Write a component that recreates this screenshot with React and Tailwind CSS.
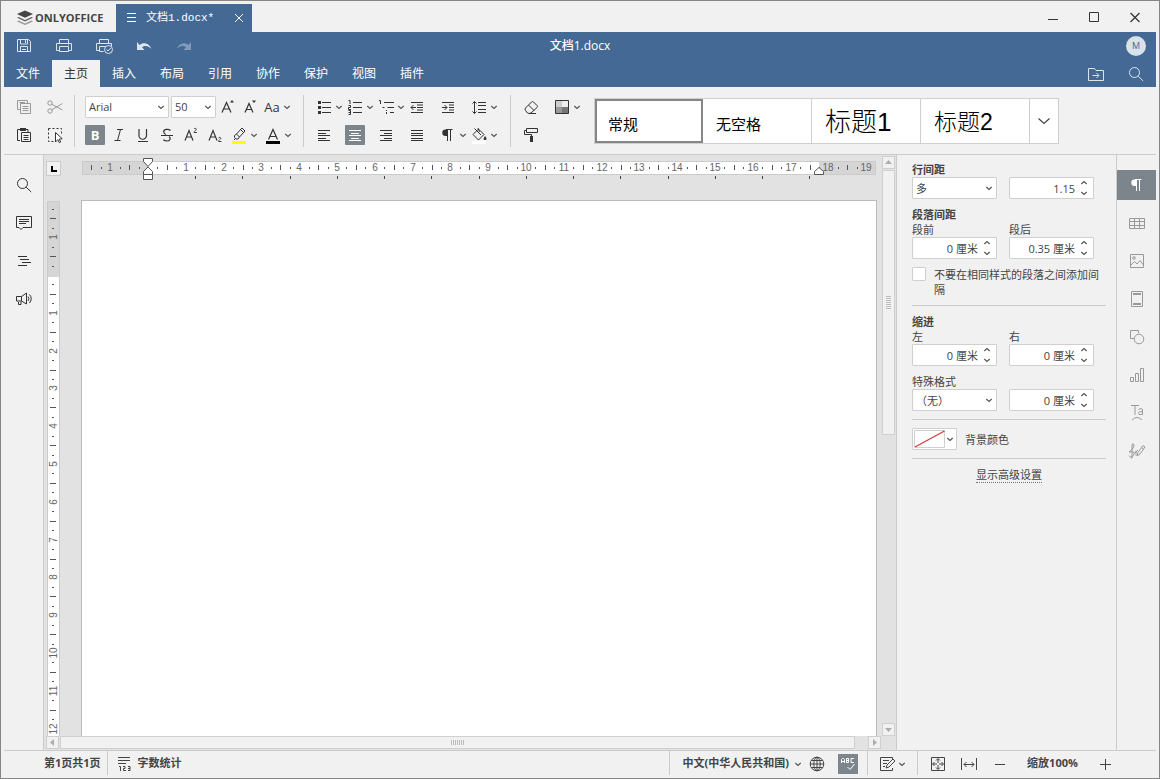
import React, { useState } from "react";

const UI_FONT = "font-['Open_Sans','Noto_Sans_CJK_SC',sans-serif]";

// base svg, drawn on a 20px grid
const Icon = ({ children, className = "", size = 20 }) => (
  <svg
    width={size}
    height={size}
    viewBox={`0 0 ${size} ${size}`}
    fill="none"
    stroke="currentColor"
    className={`shrink-0 ${className}`}
    aria-hidden="true"
  >
    {children}
  </svg>
);

const Caret = ({ className = "" }) => (
  <svg
    width="10"
    height="10"
    viewBox="0 0 10 10"
    fill="none"
    stroke="#555"
    strokeWidth="1.2"
    className={`shrink-0 pointer-events-none ${className}`}
    aria-hidden="true"
  >
    <path d="M2.3 4 5 6.5 7.7 4" />
  </svg>
);

const ParaMark = () => (
  <Icon>
    <path d="M9.5 4.5h-2a3.2 3.2 0 0 0 0 6.4h2z" fill="currentColor" stroke="none" />
    <path d="M8 4.5h6.5M9.5 4v12M12.5 4v12" />
  </Icon>
);

const SearchIcon = () => (
  <Icon>
    <circle cx="8.5" cy="8.5" r="5" />
    <path d="m12.2 12.2 5 4.8" />
  </Icon>
);

// toolbar button with optional drop-down arrow
const Tool = ({ label, caret, active, muted, wide, children }) => (
  <div className={`flex items-center ${wide ? "w-[31px]" : ""}`}>
    <button
      type="button"
      aria-label={label}
      title={label}
      className={`flex h-5 w-5 items-center justify-center rounded-[1px] ${
        active ? "bg-[#7d858c] text-white" : muted ? "text-[#999]" : "text-[#333]"
      }`}
    >
      {children}
    </button>
    {caret && <Caret />}
  </div>
);

const Separator = () => <div className="h-[52px] w-px shrink-0 self-center bg-[#cbcbcb]" />;

const Combo = ({ label, value, className = "" }) => (
  <div className={`relative h-[22px] shrink-0 ${className}`}>
    <select
      aria-label={label}
      defaultValue={value}
      className="block h-full w-full appearance-none rounded-[1px] border border-[#cfcfcf] bg-white pl-[3px] text-[11px] text-[#444]"
    >
      <option>{value}</option>
    </select>
    <Caret className="absolute top-[6px] right-[3px]" />
  </div>
);

const Spinner = ({ id, label, value }) => {
  const [val, setVal] = useState(value);
  return (
    <div className="flex h-[22px] w-[85px] items-center rounded-[1px] border border-[#cfcfcf] bg-white">
      <input
        id={id}
        aria-label={label}
        value={val}
        onChange={(e) => setVal(e.target.value)}
        className="w-full min-w-0 flex-1 bg-transparent text-right text-[11px] text-[#444]"
      />
      <div className="flex w-[18px] flex-col items-center">
        <button type="button" aria-label="+" className="flex h-[10px] items-center">
          <Caret className="rotate-180" />
        </button>
        <button type="button" aria-label="-" className="flex h-[10px] items-center">
          <Caret />
        </button>
      </div>
    </div>
  );
};

const TitleBar = () => (
  <header className="flex h-[31px] shrink-0 items-end">
    <div className="flex h-full w-28 items-center pt-[3px] pl-3 text-[#444]">
      <Icon size={18}>
        <path d="m9 1.5 8 3.6-8 3.7-8-3.7z" fill="#444" stroke="none" />
        <path d="m2.7 8 6.3 2.9L15.3 8l1.700.8-8 3.700-8-3.700z" fill="#666" stroke="none" />
        <path d="m2.7 11.6 6.3 2.9 6.3-2.9 1.700.8-8 3.700-8-3.700z" fill="#999" stroke="none" />
      </Icon>
      <span className="ml-px text-[11px] font-bold">ONLYOFFICE</span>
    </div>
    <div className="flex h-7 w-[136px] items-center bg-[#446995] pr-2 pl-[5px] text-white">
      <Icon>
        <path d="M6 5.5h9M6 9.5h9M6 13.5h9" />
      </Icon>
      <span className="ml-[5px] flex-1 text-[11px] font-['Liberation_Mono','Noto_Sans_CJK_SC',monospace]">文档1.docx*</span>
      <button type="button" aria-label="关闭文档" className="flex items-center">
        <Icon size={10}>
          <path d="m1 1 8 8M9 1 1 9" />
        </Icon>
      </button>
    </div>
    <div className="ml-auto flex items-center gap-[21px] self-center pr-[11px] text-[#333]">
      <button type="button" aria-label="最小化">
        <Icon>
          <path d="M5 12.5h10" />
        </Icon>
      </button>
      <button type="button" aria-label="最大化">
        <Icon>
          <path d="M5.5 5.5h9v9h-9z" />
        </Icon>
      </button>
      <button type="button" aria-label="关闭">
        <Icon>
          <path d="m5.5 6 9 9m0-9-9 9" strokeWidth="1.2" />
        </Icon>
      </button>
    </div>
  </header>
);

const tabs = ["文件", "主页", "插入", "布局", "引用", "协作", "保护", "视图", "插件"];

const Header = () => {
  const [tab, setTab] = useState("主页");
  return (
    <div className="shrink-0 bg-[#446995] text-[#dce5ef]">
      <div className="grid h-7 grid-cols-[1fr_auto_1fr] items-center">
        <div className="flex">
          <button type="button" aria-label="保存" className="flex w-10 justify-center">
            <Icon>
              <path d="M3.5 3.5h11l2 2v10h-13zM6.5 4v4h7V4M11.5 4v3M6.5 15v-4.500h7V15M8 13.5h4" />
            </Icon>
          </button>
          <button type="button" aria-label="打印" className="flex w-10 justify-center">
            <Icon>
              <path d="M5.5 7V3.5h9V7M5 14.5H2.5v-7h15v7H15M5.5 10.5h9v5h-9zM14 9h1" />
            </Icon>
          </button>
          <button type="button" aria-label="快速打印" className="flex w-10 justify-center">
            <Icon>
              <path d="M5.5 7V3.5h9V7M5 14.5H2.5v-7h15V10M9.5 15.5h-4v-5h6" />
              <circle cx="14.5" cy="13.5" r="4" />
              <path d="m12.5 13.5 1.5 1.5 2.8-3" />
            </Icon>
          </button>
          <button type="button" aria-label="撤消" className="flex w-10 justify-center">
            <Icon>
              <path d="M3 6v8h7.5L8 11.3c2.5-2.3 6.5-1.8 9.3 1.5C15.5 7.5 9.5 5.5 5.5 9z" fill="currentColor" stroke="none" />
            </Icon>
          </button>
          <button type="button" aria-label="重做" className="flex w-10 justify-center opacity-40">
            <Icon>
              <path d="M17 6v8H9.5l2.5-2.7c-2.5-2.3-6.5-1.8-9.3 1.5C4.5 7.5 10.5 5.5 14.5 9z" fill="currentColor" stroke="none" />
            </Icon>
          </button>
        </div>
        <h1 className="text-[12px] font-medium text-white">文档1.docx</h1>
        <div className="flex justify-end pr-[10px]">
          <span className="flex h-5 w-5 items-center justify-center rounded-full bg-[#d9e1ea] text-[9px] text-[#446995]">M</span>
        </div>
      </div>
      <div className="flex h-[27px] items-center">
        <nav className="flex h-full">
          {tabs.map((t) => (
            <button
              key={t}
              type="button"
              onClick={() => setTab(t)}
              className={`w-12 text-[12px] ${t === tab ? "bg-[#f1f1f1] text-[#333]" : "text-white"}`}
            >
              {t}
            </button>
          ))}
        </nav>
        <div className="ml-auto flex gap-5 pr-[10px]">
          <button type="button" aria-label="打开文件位置">
            <Icon>
              <path d="M2.5 16.5v-12h6l1.5 2h7.5v10zM6.5 11.5h6M10.5 9l2.5 2.5-2.5 2.5" />
            </Icon>
          </button>
          <button type="button" aria-label="查找">
            <SearchIcon />
          </button>
        </div>
      </div>
    </div>
  );
};

const alignPaths = {
  left: "M4 5.5h12M4 8h8M4 10.5h12M4 13h8M4 15.5h12",
  center: "M4 5.5h12M6 8h8M4 10.5h12M6 13h8M4 15.5h12",
  right: "M4 5.5h12M8 8h8M4 10.5h12M8 13h8M4 15.5h12",
  justify: "M4 5.5h12M4 8h12M4 10.5h12M4 13h12M4 15.5h12",
};

const AlignIcon = ({ kind }) => (
  <Icon>
    <path d={alignPaths[kind]} shapeRendering="crispEdges" />
  </Icon>
);

const Toolbar = () => (
  <div className="flex shrink-0 border-b border-[#cbcbcb] bg-[#f1f1f1] pt-[6px] pb-[5px]">
    <div className="grid shrink-0 grid-cols-2 items-center gap-x-[11px] pr-[9px] pl-[10px]">
      <Tool label="复制" muted>
        <Icon>
          <path d="M6 12.5H3.5v-9h10V6M6.5 6.5h10v10h-10zM5.5 5.5H11M8.5 9.5h6M8.5 11.5h6M8.5 13.5h6" />
        </Icon>
      </Tool>
      <Tool label="剪切" muted>
        <Icon>
          <circle cx="5" cy="6" r="2.2" />
          <circle cx="5" cy="14" r="2.2" />
          <path d="M6.8 7.3 17.5 13M6.8 12.7 17.5 6.5" />
        </Icon>
      </Tool>
      <Tool label="粘贴">
        <Icon>
          <path d="M6 15.5H3.5v-11H14V7" />
          <path d="M6 3h6v3H6z" fill="currentColor" stroke="none" />
          <path d="M7.5 7.5h9v9h-9zM9.5 10.5h5M9.5 12.5h5M9.5 14.5h5" />
        </Icon>
      </Tool>
      <Tool label="全选">
        <Icon>
          <path d="M3.5 3.5h13v5M3.5 3.5v13H10" strokeDasharray="2 2" />
          <path d="M10.5 7.5V17l2.3-2.3 1.6 3 1.3-.7-1.5-2.8 3-.5z" fill="#fff" />
        </Icon>
      </Tool>
    </div>
    <Separator />
    <div className="flex shrink-0 flex-col px-[10px]">
      <div className="flex h-7 items-center gap-[2px]">
        <Combo label="字体" value="Arial" className="w-[84px]" />
        <Combo label="字号" value="50" className="w-[45px]" />
        <Tool label="增大字号">
          <Icon>
            <path d="m4 15.5 4.5-10 4.5 10M5.5 12h6" strokeWidth="1.2" />
            <path d="m12 5.5 2-2.500 2 2.500z" fill="currentColor" stroke="none" />
          </Icon>
        </Tool>
        <Tool label="减小字号">
          <Icon>
            <path d="m5 15.5 4-9 4 9M6.5 12.5h5" strokeWidth="1.2" />
            <path d="m12 3.5 2 2.500 2-2.500z" fill="currentColor" stroke="none" />
          </Icon>
        </Tool>
        <Tool label="更改大小写" caret>
          <span className="text-[13px] leading-5">Aa</span>
        </Tool>
      </div>
      <div className="flex h-7 items-center gap-1">
        <Tool label="加粗" active>
          <span className="text-[13px] leading-5 font-bold">B</span>
        </Tool>
        <Tool label="斜体">
          <Icon>
            <path d="M8 4.5h6M5.5 15.5h6M11.5 4.5l-3 11" />
          </Icon>
        </Tool>
        <Tool label="下划线">
          <Icon>
            <path d="M6 4v6.5a3.5 3.5 0 0 0 7.5 0V4" strokeWidth="1.2" />
            <path d="M5 16.5h10" />
          </Icon>
        </Tool>
        <Tool label="删除线">
          <Icon>
            <path d="M13.500 5.500C11 3.500 6.500 4.200 6.700 7c.1 1.300 1 2 2.300 2.500M12 11.500c2.500 1.800.8 4.500-2 4.500-1.600 0-2.700-.5-3.700-1.200" strokeWidth="1.2" />
            <path d="M4 10.5h12" />
          </Icon>
        </Tool>
        <Tool label="上标">
          <Icon>
            <path d="m4 15.5 4-10 4 10M5.500 12h5" strokeWidth="1.2" />
            <path d="M13 4c.5-1 2.500-.8 2.300.4C15.200 5.200 13 6 13 7.500h3" strokeWidth=".9" />
          </Icon>
        </Tool>
        <Tool label="下标">
          <Icon>
            <path d="m4 15.5 4-10 4 10M5.500 12h5" strokeWidth="1.2" />
            <path d="M13.500 13c.5-1 2.500-.8 2.300.4-.1.800-2.300 1.600-2.300 3.100h3" strokeWidth=".9" />
          </Icon>
        </Tool>
        <Tool label="突出显示颜色" caret>
          <Icon>
            <path d="M3 16h14v3H3z" fill="#ff0" stroke="none" />
            <path d="m7.500 9 5.500-6 3 3-5.500 6zM7.500 9l-2 1.500v2l1.500 1.500h2l1.500-2M11.500 4.500l3 3M5 15l1.500-1.500" />
          </Icon>
        </Tool>
        <Tool label="字体颜色" caret>
          <Icon>
            <path d="M3 16h14v3H3z" fill="#000" stroke="none" />
            <path d="m5.500 14.500 4.500-10 4.500 10M7 11.500h6" strokeWidth="1.2" />
          </Icon>
        </Tool>
      </div>
    </div>
    <Separator />
    <div className="flex shrink-0 flex-col px-[10px]">
      <div className="flex h-7 items-center">
        <Tool label="项目符号" caret wide>
          <Icon>
            <path d="M8 5.5h9M8 10.5h9M8 15.5h9" />
            <path d="M4 4h3v3H4zM4 9h3v3H4zM4 14h3v3H4z" fill="currentColor" stroke="none" />
          </Icon>
        </Tool>
        <Tool label="编号" caret wide>
          <Icon>
            <path d="M8 5.5h9M8 10.5h9M8 15.5h9M3.500 3.500H5V7M3.500 8.500h2v2h-2v2H6M3.500 13.500h2v4h-2M3.500 15.500h2" />
          </Icon>
        </Tool>
        <Tool label="多级列表" caret wide>
          <Icon>
            <path d="M8 5.5h10M11.500 10.5H18M14 15.5h4M3 3.5h1.500V7M6.500 10.500h2M10.500 13v1M10.500 15v2" />
          </Icon>
        </Tool>
        <Tool label="减少缩进" wide>
          <Icon>
            <path d="M4 5.5h12M10 8h6M10 10.5h6M10 13h6M4 15.5h12M4 10.5h5M6.5 8 4 10.5 6.5 13" />
          </Icon>
        </Tool>
        <Tool label="增加缩进" wide>
          <Icon>
            <path d="M4 5.5h12M11 8h5M11 10.5h5M11 13h5M4 15.5h12M4 10.5h5M6.5 8 9 10.5 6.5 13" />
          </Icon>
        </Tool>
        <Tool label="行距" caret wide>
          <Icon>
            <path d="M9 5.5h8M9 8.5h8M9 12.5h8M9 15.5h8M5.5 4.5v12M3.5 6.5l2-2 2 2M3.5 14.5l2 2 2-2" />
          </Icon>
        </Tool>
      </div>
      <div className="flex h-7 items-center">
        <Tool label="左对齐" wide><AlignIcon kind="left" /></Tool>
        <Tool label="居中" active wide><AlignIcon kind="center" /></Tool>
        <Tool label="右对齐" wide><AlignIcon kind="right" /></Tool>
        <Tool label="两端对齐" wide><AlignIcon kind="justify" /></Tool>
        <Tool label="非打印字符" caret wide><ParaMark /></Tool>
        <Tool label="底纹" caret wide>
          <Icon>
            <path d="M3 16h14v3H3z" fill="#fff" stroke="none" />
            <path d="m9.500 4 5.500 5.500-5.500 5.500L4 9.500zM9 3l1.500 4M5.500 3.500 12 10" />
            <path d="M16 11c2.500 3 1.500 4 0 4s-2-1.500 0-4z" fill="currentColor" stroke="none" />
          </Icon>
        </Tool>
      </div>
    </div>
    <Separator />
    <div className="flex shrink-0 flex-col pr-[11px] pl-[10px]">
      <div className="flex h-7 items-center">
        <Tool label="清除样式" wide>
          <Icon>
            <path d="m4.500 11 6-6q1-1 2 0L16 8.500q1 1 0 2L10 16q-2 1-3.500 0l-2-2.500q-1-1.500 0-2.500zM7.500 8l5.500 5.500M8 16.500h7" />
          </Icon>
        </Tool>
        <Tool label="颜色方案" caret wide>
          <Icon>
            <path d="M4 4h6v6H4z" fill="#ccc" stroke="none" />
            <path d="M10 4h6v6h-6z" fill="#eee" stroke="none" />
            <path d="M4 10h6v6H4z" fill="#999" stroke="none" />
            <path d="M10 10h6v6h-6z" fill="#777" stroke="none" />
            <path d="M3.5 3.5h13v13h-13z" />
          </Icon>
        </Tool>
      </div>
      <div className="flex h-7 items-center">
        <Tool label="复制样式" wide>
          <Icon>
            <path d="M5.5 3.5h11v4h-11zM5.5 5.5h-2v4h7V12" />
            <path d="M9 11h3v6H9z" fill="currentColor" stroke="none" />
          </Icon>
        </Tool>
      </div>
    </div>
    <div className="flex h-[46px] shrink-0 self-center border border-[#cfcfcf] bg-white text-black font-['Liberation_Sans','Noto_Sans_CJK_SC',sans-serif]">
      <button type="button" className="w-[108px] border-2 border-[#868686] pt-2 pl-[11px] text-left text-[15px]">常规</button>
      <button type="button" className="w-[109px] border-r border-[#cfcfcf] pt-2 pl-[13px] text-left text-[15px]">无空格</button>
      <button type="button" className="w-[109px] border-r border-[#cfcfcf] pt-px pl-[13px] text-left text-[26px] leading-8 font-light">标题1</button>
      <button type="button" className="w-[109px] border-r border-[#cfcfcf] pt-px pl-[13px] text-left text-[23px] leading-8 font-light">标题2</button>
      <button type="button" aria-label="更多样式" className="flex w-7 items-center justify-center text-[#444]">
        <Icon>
          <path d="m4.500 7.500 5.500 5 5.500-5" strokeWidth="1.2" />
        </Icon>
      </button>
    </div>
  </div>
);

const CM = 37.8;

// ticks every quarter of a centimetre, numbers on whole ones
const marks = (from, to) => {
  const list = [];
  for (let q = from; q <= to; q++) {
    if (q === 0) continue;
    list.push({ q, pos: (q * CM) / 4, kind: q % 4 === 0 ? "num" : q % 2 === 0 ? "half" : "quarter" });
  }
  return list;
};

const HRuler = () => (
  <svg width="795" height="26" viewBox="81 155 795 26" className="shrink-0 overflow-visible">
    <path d="M82 161h794v14H82z" fill="#d5d5d5" />
    <path d="M148 162h671v12H148z" fill="#fff" />
    <path d="M82.5 161.5h793v13h-793z" fill="none" stroke="#cbcbcb" />
    {marks(-6, 76).map(({ q, pos, kind }) => {
      const x = Math.round(148 + pos);
      if (kind === "num")
        return (
          <text key={q} x={x} y="171" fontSize="10" textAnchor="middle" fill="#666" className="font-['Liberation_Sans',sans-serif]">
            {Math.abs(q / 4)}
          </text>
        );
      return <path key={q} d={kind === "half" ? `M${x + 0.5} 165v5` : `M${x + 0.5} 167v2`} stroke="#555" />;
    })}
    {[...Array(14)].map((_, i) => (
      <path key={i} d={`M${Math.round(195 + i * CM * 1.25) + 0.5} 176v3`} stroke="#444" />
    ))}
    <g fill="#fff" stroke="#555">
      <path d="M143.5 158.5h9v3l-4.500 5-4.500-5z" />
      <path d="M143.5 174.5v-3l4.500-4.500 4.500 4.500v3z" />
      <path d="M143.5 174.5h9v5h-9z" />
      <path d="M814.5 174.5v-3l4.500-4 4.500 4v3z" />
    </g>
  </svg>
);

const VRuler = () => (
  <svg width="13" height="100%" className="block">
    <path d="M0 0h13v2000H0z" fill="#fff" />
    <path d="M0 0h13v76H0z" fill="#d5d5d5" />
    <path d="M.5 2000V.5h12V2000" fill="none" stroke="#cbcbcb" />
    {marks(-7, 48).map(({ q, pos, kind }) => {
      const y = Math.round(74 + pos);
      if (kind === "num")
        return (
          <text key={q} transform={`translate(10 ${y}) rotate(-90)`} fontSize="10" textAnchor="middle" fill="#666" className="font-['Liberation_Sans',sans-serif]">
            {Math.abs(q / 4)}
          </text>
        );
      return <path key={q} d={kind === "half" ? `M3 ${y + 0.5}h6` : `M5 ${y + 0.5}h2`} stroke="#555" />;
    })}
  </svg>
);

const ScrollButton = ({ label, d }) => (
  <button type="button" aria-label={label} className="h-[13px] w-[13px] shrink-0 border border-[#cfcfcf] bg-[#f1f1f1]">
    <svg width="11" height="11" viewBox="0 0 11 11" fill="#adadad">
      <path d={d} />
    </svg>
  </button>
);

const Editor = () => (
  <section className="flex min-w-0 flex-1 bg-[#e2e2e2]">
    <div className="flex min-w-0 flex-1 flex-col pl-[2px]">
      <div className="flex h-[45px] shrink-0">
        <div className="flex w-[35px] shrink-0 items-start pt-[6px]">
          <button type="button" aria-label="制表位" className="h-[15px] w-[15px] border border-[#cbcbcb] bg-[#f1f1f1]">
            <svg width="13" height="13" viewBox="0 0 13 13" fill="none" stroke="#000" strokeWidth="2">
              <path d="M5 4v5h5" />
            </svg>
          </button>
        </div>
        <HRuler />
      </div>
      <div className="flex min-h-0 flex-1">
        <div className="w-[35px] shrink-0 overflow-hidden pt-px pl-px">
          <VRuler />
        </div>
        <div
          contentEditable
          suppressContentEditableWarning
          aria-label="文档正文"
          className="w-[796px] shrink-0 border border-b-0 border-[#b8bcbf] bg-white outline-none"
        />
      </div>
      <div className="flex h-[14px] shrink-0">
        <ScrollButton label="向左滚动" d="M7 2v7L3 5.5z" />
        <div className="ml-px flex h-[13px] w-[795px] items-center justify-center border border-[#cfcfcf] bg-[#f1f1f1]">
          <svg width="13" height="5" stroke="#bbb">
            <path d="M.5 0v5M2.5 0v5M4.5 0v5M6.5 0v5M8.5 0v5M10.5 0v5M12.5 0v5" />
          </svg>
        </div>
        <div className="flex-1" />
        <ScrollButton label="向右滚动" d="M4 2v7l4-3.5z" />
      </div>
    </div>
    <div className="flex w-[15px] shrink-0 flex-col pt-px pb-[14px] pl-px">
      <ScrollButton label="向上滚动" d="M2 7h7L5.5 3z" />
      <div className="min-h-0 flex-1 pt-px">
        <div className="flex h-[48%] w-[13px] items-center justify-center border border-[#cfcfcf] bg-[#f1f1f1]">
          <svg width="5" height="13" stroke="#bbb">
            <path d="M0 .5h5M0 2.5h5M0 4.5h5M0 6.5h5M0 8.5h5M0 10.5h5M0 12.5h5" />
          </svg>
        </div>
      </div>
      <ScrollButton label="向下滚动" d="M2 4h7L5.5 8z" />
    </div>
  </section>
);

const LeftBar = () => (
  <aside className="flex w-10 shrink-0 flex-col items-center gap-2 border-r border-[#cbcbcb] pt-[15px] text-[#333]">
    <button type="button" aria-label="查找" className="flex h-[30px] items-center">
      <SearchIcon />
    </button>
    <button type="button" aria-label="批注" className="flex h-[30px] items-center">
      <Icon>
        <path d="M2.5 3.5h15v11H9l-2 2-2-2H2.5zM5 6.5h10M5 8.5h10M5 10.5h7" />
      </Icon>
    </button>
    <button type="button" aria-label="标题" className="flex h-[30px] items-center">
      <Icon>
        <path d="M4 5.5h9M6 8.5h9M8 11.5h9M4 14.5h9" />
      </Icon>
    </button>
    <button type="button" aria-label="反馈" className="flex h-[30px] items-center">
      <Icon>
        <path d="M2.5 7.5h5l5-3.500v11l-5-3h-5zM7.5 7.5v5M4.500 13v2.500H7V13M14 7.500q2 2.200 0 4.500M15.500 5.500q3.500 4.200 0 8.500" />
      </Icon>
    </button>
  </aside>
);

const Divider = () => <hr className="border-[#cbcbcb]" />;

const ParagraphPanel = () => (
  <aside className="w-[220px] shrink-0 space-y-2 border-l border-[#cbcbcb] pt-[7px] pr-[10px] pl-[15px] text-[11px] leading-[15px] text-[#444]">
    <div>
      <h2 className="font-bold">行间距</h2>
      <div className="flex gap-3">
        <Combo label="行间距" value="多" className="w-[85px]" />
        <Spinner label="行间距值" value="1.15" />
      </div>
    </div>
    <div>
      <h2 className="font-bold">段落间距</h2>
      <div className="flex gap-3">
        <div>
          <label htmlFor="before" className="block">段前</label>
          <Spinner id="before" value="0 厘米" />
        </div>
        <div>
          <label htmlFor="after" className="block">段后</label>
          <Spinner id="after" value="0.35 厘米" />
        </div>
      </div>
    </div>
    <label className="flex items-start gap-2">
      <input type="checkbox" className="h-[14px] w-[14px] shrink-0 appearance-none rounded-[1px] border border-[#cfcfcf] bg-white" />
      <span>不要在相同样式的段落之间添加间隔</span>
    </label>
    <Divider />
    <div>
      <h2 className="font-bold">缩进</h2>
      <div className="flex gap-3">
        <div>
          <label htmlFor="left" className="block">左</label>
          <Spinner id="left" value="0 厘米" />
        </div>
        <div>
          <label htmlFor="right" className="block">右</label>
          <Spinner id="right" value="0 厘米" />
        </div>
      </div>
    </div>
    <div>
      <h3>特殊格式</h3>
      <div className="flex gap-3">
        <Combo label="特殊格式" value="（无）" className="w-[85px]" />
        <Spinner label="特殊格式值" value="0 厘米" />
      </div>
    </div>
    <Divider />
    <div className="flex items-center gap-2">
      <button type="button" aria-label="背景颜色" className="flex h-[22px] w-[45px] items-center rounded-[1px] border border-[#cfcfcf] bg-white pl-px">
        <svg width="31" height="18" viewBox="0 0 31 18" fill="none">
          <path d="M.5.5h30v17H.5z" stroke="#cfcfcf" />
          <path d="M1 17 30.5 1" stroke="#d43b3b" strokeWidth="1.3" />
        </svg>
        <Caret />
      </button>
      <span>背景颜色</span>
    </div>
    <Divider />
    <div className="flex justify-center">
      <a href="#advanced" className="border-b border-dotted border-[#777]">显示高级设置</a>
    </div>
  </aside>
);

const panels = [
  ["段落设置", <ParaMark />],
  ["表格设置", <Icon><path d="M2.5 5.5h15v10h-15zM2 8.5h16M2 12.5h16M7.5 5v11M12.5 5v11" /></Icon>],
  ["图像设置", <Icon><path d="M3.5 3.5h13v13h-13zM4 14l3.5-3.500L10 13l3-3.500 3.500 4.500" /><circle cx="7" cy="7" r="1.3" /></Icon>],
  ["页眉和页脚设置", <Icon><path d="M4.5 2.5h11v15h-11z" /><path d="M6 4h8v2H6zM6 14h8v2H6z" fill="currentColor" stroke="none" /></Icon>],
  ["形状设置", <Icon><path d="M7 11.5H3.5v-8h8V6" /><circle cx="12" cy="12" r="4.8" /></Icon>],
  ["图表设置", <Icon><path d="M3.5 12.5h3v4h-3zM8.5 8.5h3v8h-3zM13.5 3.5h3v13h-3z" /></Icon>],
  ["艺术字设置", <Icon><path d="M4 2.5h8M8 2.5V12M11.500 6.500q3-2 4 0V12M15.500 8.500c-3 0-4 .5-4 1.800 0 1.800 3 1.800 4 0M5 17q5-5 10 0" /></Icon>],
  ["签名设置", <Icon><path d="M5 17.500V5q0-3 1.500-2T5.500 8L2 11h5q1 1-1 4t-4-.5M9 9.500v5M10 15l1-3.500 5-7 2 1.500-5 7zM14.500 6.500l2 1.500M8 12l3-3" /></Icon>],
];

const RightBar = () => (
  <aside className="flex w-10 shrink-0 flex-col gap-2 border-l border-[#cbcbcb] pt-[15px]">
    {panels.map(([label, icon], i) => (
      <button
        key={label}
        type="button"
        aria-label={label}
        className={`flex h-[30px] items-center justify-center ${i === 0 ? "bg-[#7d858c] text-white" : "text-[#999]"}`}
      >
        {icon}
      </button>
    ))}
  </aside>
);

const StatusSep = () => <div className="h-6 w-px shrink-0 self-start bg-[#cbcbcb]" />;

const StatusBar = () => (
  <footer className="flex h-7 shrink-0 items-center border-t border-[#cbcbcb] pr-[41px] pb-[2px] pl-10 text-[11px] font-bold whitespace-nowrap text-[#444]">
    <button type="button" className="mr-[6px]">第1页共1页</button>
    <StatusSep />
    <button type="button" className="flex items-center gap-1 pl-[6px]">
      <Icon>
        <path d="M4 3.5h12M4 6.5h12M4 9.5h8M5 12.5h1.500V17M9 12.500h2v2H9.500v2H12M14 12.500h2v4h-2M14 14.500h2" />
      </Icon>
      字数统计
    </button>
    <div className="ml-auto flex items-center self-stretch">
      <StatusSep />
      <button type="button" className="flex items-center gap-1 pl-[13px]">
        中文(中华人民共和国)
        <Caret />
      </button>
      <button type="button" aria-label="设置文档语言" className="ml-1">
        <Icon>
          <circle cx="10" cy="10" r="6.8" />
          <ellipse cx="10" cy="10" rx="3.2" ry="6.8" />
          <path d="M10 3v14M3 10h14M4.500 6.500h11M4.500 13.500h11" />
        </Icon>
      </button>
      <button type="button" aria-label="拼写检查" className="mr-[9px] ml-[11px] h-5 w-5 bg-[#7d858c] text-white">
        <Icon>
          <path d="M3.500 9V5.500l1-1h1l1 1V9M3.500 7.500h3M8.500 4.500h2v4h-2zM8.500 6.500H11M16 4.500h-3v4h3M9.500 13l2.500 2.500 4.500-5.500" />
        </Icon>
      </button>
      <StatusSep />
      <button type="button" aria-label="跟踪修订" className="mr-[10px] ml-[9px] flex items-center">
        <Icon>
          <path d="M15.5 5V3.5h-12v13h12V14M6 6.5h6M6 9.5h4M6 12.5h2M9 14l1-3 6-6 2 2-6 6z" />
        </Icon>
        <Caret />
      </button>
      <StatusSep />
      <div className="ml-[10px] flex items-center gap-[11px]">
        <button type="button" aria-label="适合页面">
          <Icon>
            <path d="M3.5 3.5h13v13h-13zM10 5v4M10 11v4M5 10h4M11 10h4M8 6.5l2-2 2 2M8 13.5l2 2 2-2M6.5 8l-2 2 2 2M13.5 8l2 2-2 2" />
          </Icon>
        </button>
        <button type="button" aria-label="适合宽度">
          <Icon>
            <path d="M2.5 4v12M17.5 4v12M5 10.5h10M7.5 8 5 10.5 7.5 13M12.5 8l2.500 2.500-2.500 2.500" />
          </Icon>
        </button>
        <button type="button" aria-label="缩小">
          <Icon>
            <path d="M5 10.5h10" />
          </Icon>
        </button>
      </div>
      <button type="button" className="w-[85px] text-center">缩放100%</button>
      <button type="button" aria-label="放大">
        <Icon>
          <path d="M5 10.5h11M10.5 5v11" />
        </Icon>
      </button>
    </div>
  </footer>
);

export default function App() {
  return (
    <div className={`flex h-screen flex-col overflow-hidden border border-[#868686] bg-[#f1f1f1] px-[3px] ${UI_FONT}`}>
      <TitleBar />
      <Header />
      <Toolbar />
      <main className="flex min-h-0 flex-1">
        <LeftBar />
        <Editor />
        <ParagraphPanel />
        <RightBar />
      </main>
      <StatusBar />
    </div>
  );
}
